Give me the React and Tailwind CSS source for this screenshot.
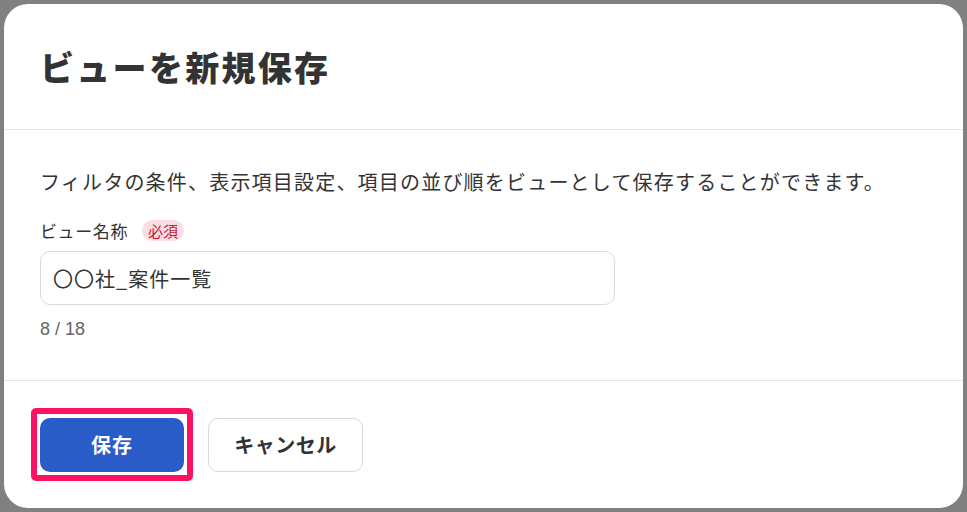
import { useState } from 'react'

const jp = { fontFamily: '"Noto Sans CJK JP", "Noto Sans", sans-serif' }

export default function App() {
  const [name, setName] = useState('〇〇社_案件一覧')

  return (
    <div className="w-[967px] h-[512px] bg-[#808080] p-1 overflow-hidden" style={jp}>
      <div className="h-full w-full bg-white rounded-[24px] flex flex-col text-[#333]">
        {/* Header */}
        <div className="h-[126px] shrink-0 flex items-center px-9 border-b border-[#e6e6e6]">
          <h1 className="text-[34px] font-black tracking-[2.3px] leading-none">ビューを新規保存</h1>
        </div>

        {/* Body */}
        <div className="h-[251px] shrink-0 px-9 pt-[37px] border-b border-[#e6e6e6]">
          <p className="text-[20px] leading-[30px] tracking-[1.2px]">
            フィルタの条件、表示項目設定、項目の並び順をビューとして保存することができます。
          </p>
          <div className="mt-[22px] h-[22px] flex items-center gap-[14px]">
            <span className="text-[17px] leading-none tracking-[0.6px]">ビュー名称</span>
            <span className="h-[21px] px-[6px] rounded-full bg-[#fbdde2] text-[#c41835] text-[15px] leading-[21px]">必須</span>
          </div>
          <input
            value={name}
            onChange={e => setName(e.target.value)}
            className="mt-[10px] block w-[575px] h-[54px] rounded-[10px] border border-[#dadada] px-3 text-[20px] tracking-[1px] text-[#333] outline-none"
            style={jp}
          />
          <p
            className="mt-[12px] text-[18px] leading-[24px] text-[#666]"
            style={{ fontFamily: '"Liberation Sans", Arial, sans-serif' }}
          >
            {name.length} / 18
          </p>
        </div>

        {/* Footer */}
        <div className="flex-1 flex items-center gap-6 px-9">
          <div className="relative">
            <button className="w-[144px] h-[54px] rounded-[10px] bg-[#2a5cc8] text-white text-[20px] font-bold tracking-[1px]">
              保存
            </button>
            <span className="absolute -left-[9px] -right-[9px] -top-[10px] -bottom-[9px] border-[6px] border-[#fc1260] rounded-[5px] pointer-events-none" />
          </div>
          <button className="w-[155px] h-[54px] rounded-[10px] border border-[#dadada] bg-white text-[20px] font-bold tracking-[0.5px] text-[#333]">
            キャンセル
          </button>
        </div>
      </div>
    </div>
  )
}
